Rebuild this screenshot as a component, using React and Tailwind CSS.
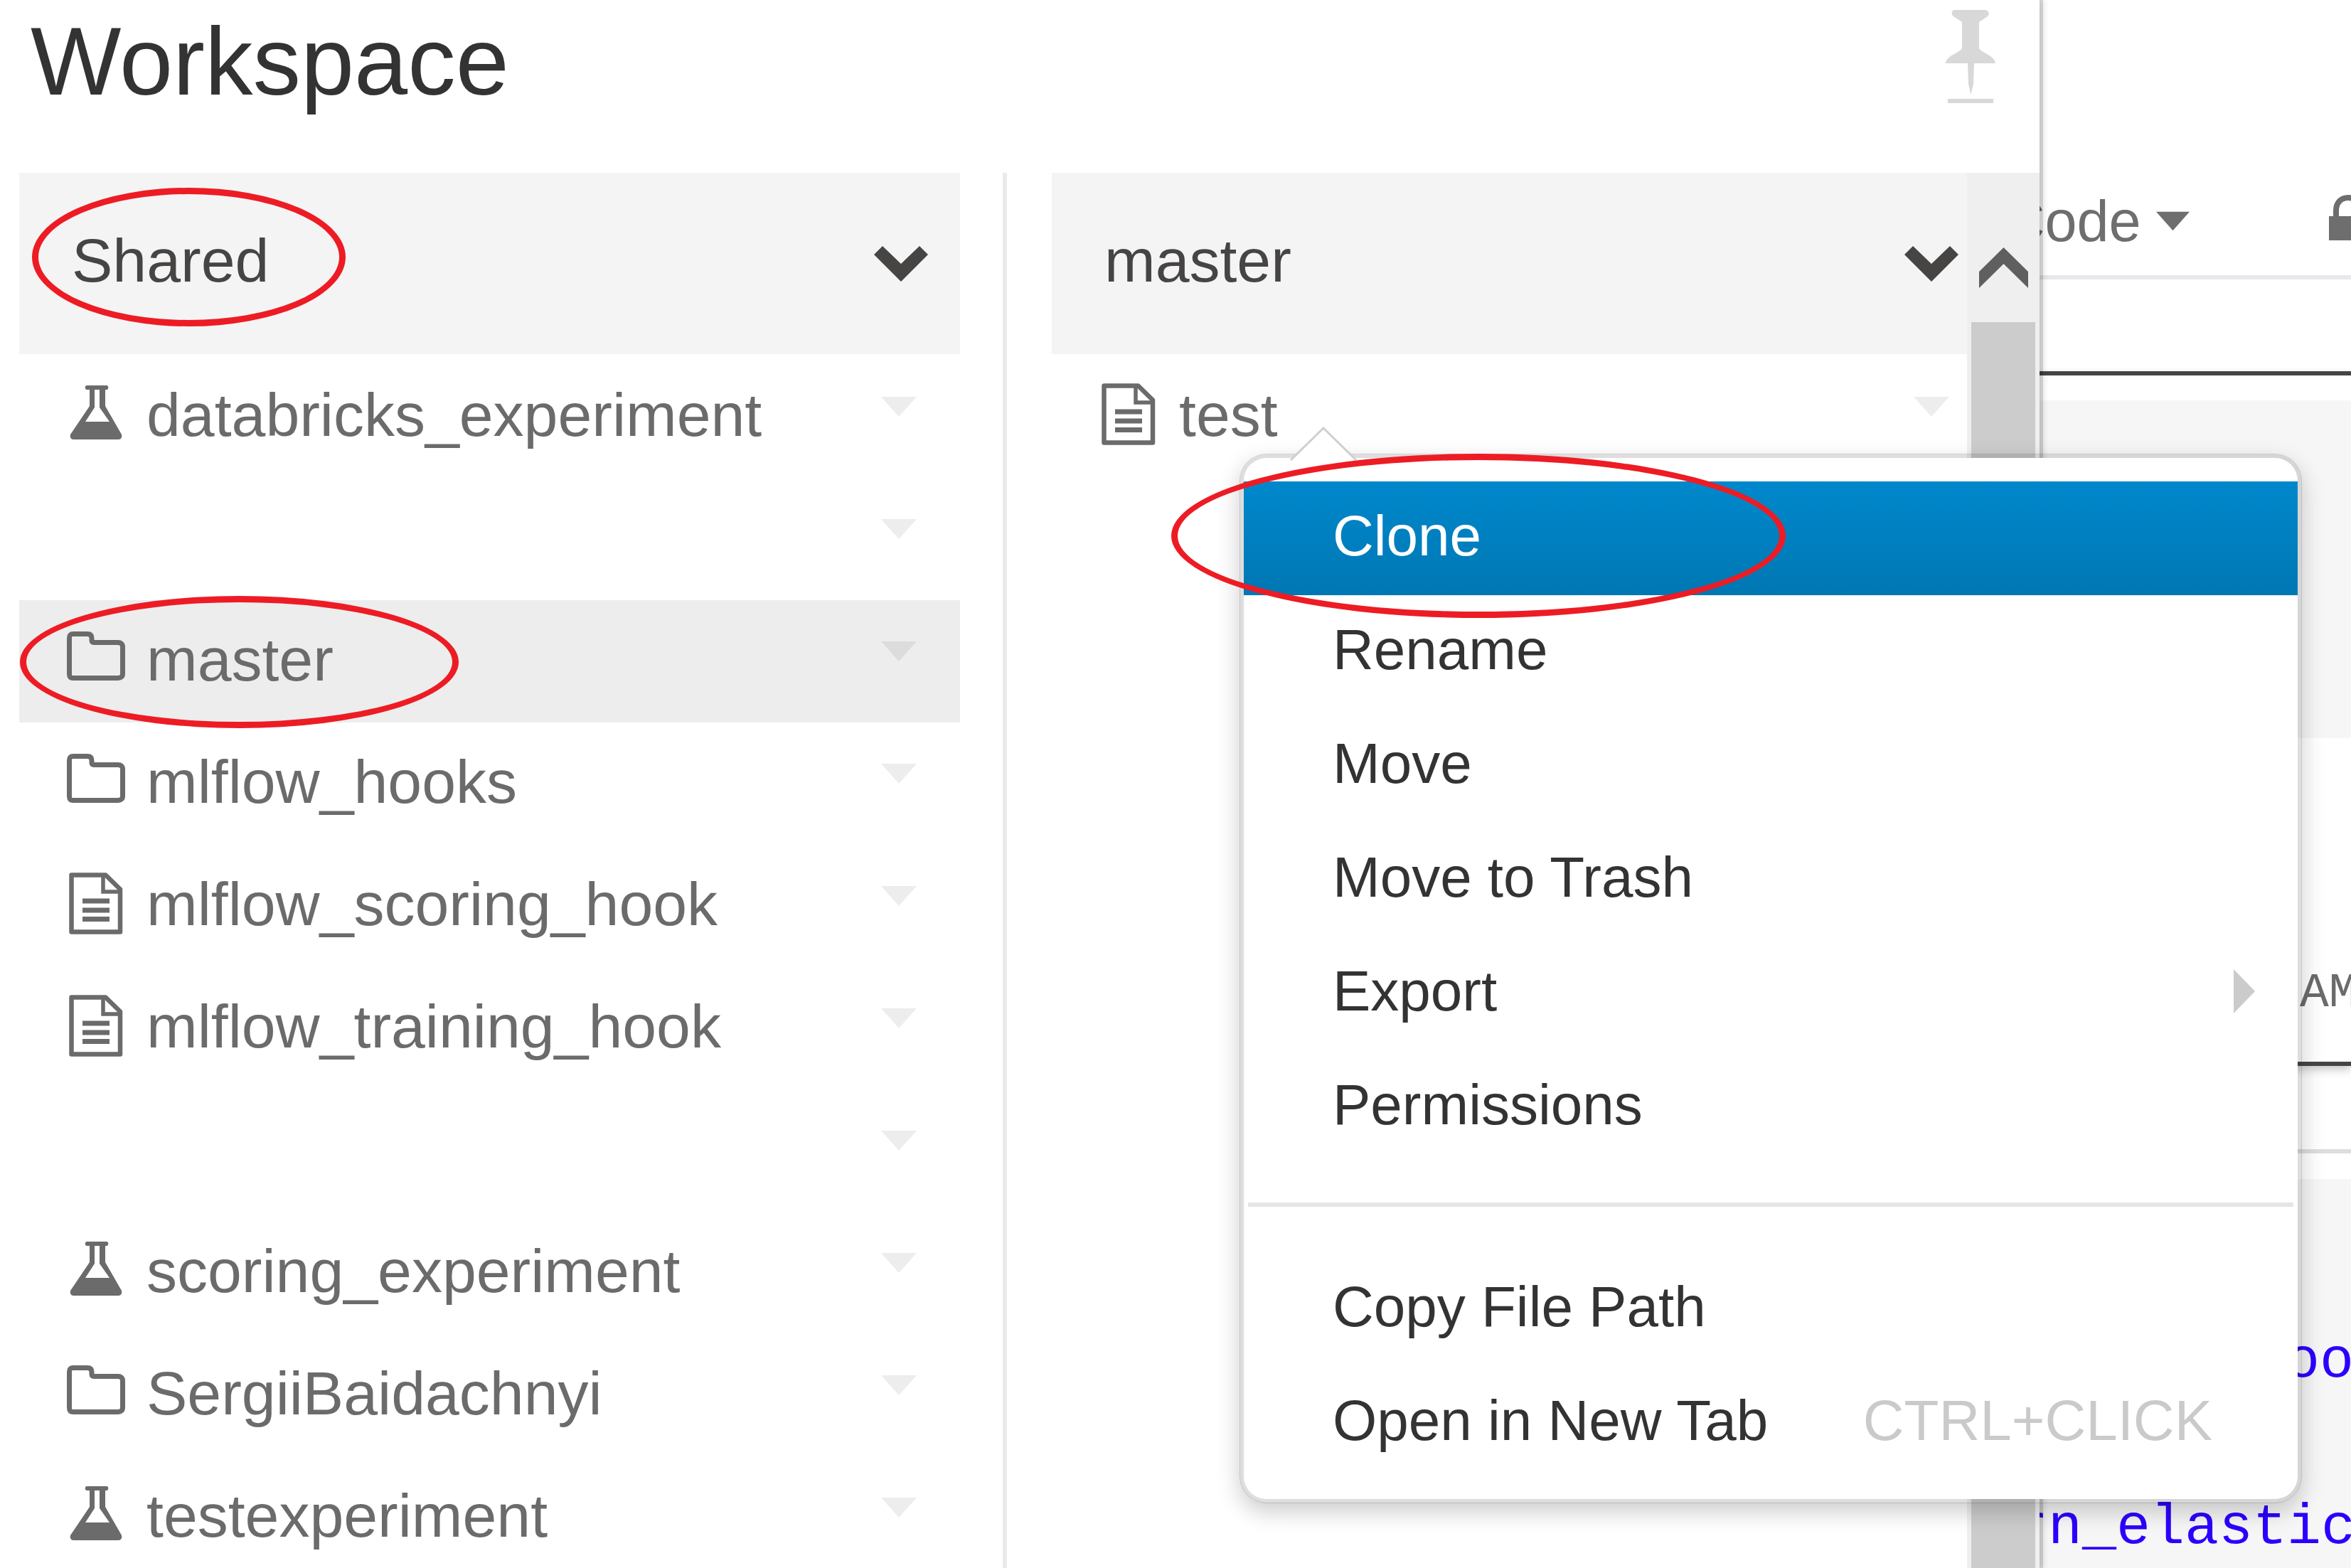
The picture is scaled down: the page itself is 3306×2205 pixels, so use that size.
const FOLDER = 'folder';
const FLASK = 'flask';
const NOTEBOOK = 'notebook';

const sharedItems = [
  { icon: FLASK, name: 'databricks_experiment' },
  { icon: null, name: '' },
  { icon: FOLDER, name: 'master', selected: true, circled: true },
  { icon: FOLDER, name: 'mlflow_hooks' },
  { icon: NOTEBOOK, name: 'mlflow_scoring_hook' },
  { icon: NOTEBOOK, name: 'mlflow_training_hook' },
  { icon: null, name: '' },
  { icon: FLASK, name: 'scoring_experiment' },
  { icon: FOLDER, name: 'SergiiBaidachnyi' },
  { icon: FLASK, name: 'testexperiment' },
];

function ItemIcon({ kind }) {
  return (
    <svg viewBox="0 0 82 96" className="h-[96px] w-[82px] shrink-0" fill="none" stroke="#6b6b6b" aria-hidden="true">
      {kind === FOLDER && (
        <path
          strokeWidth="7"
          strokeLinejoin="round"
          d="M9 12.500h20c4 0 6 2 6 6v3c0 2 1 3 3 3h34c4 0 6.500 2 6.500 6v38c0 4-2.500 6-6.500 6H9c-4 0-5.500-2-5.500-6V18.500c0-4 1.500-6 5.500-6z"
        />
      )}
      {kind === NOTEBOOK && (
        <g strokeWidth="6.500">
          <path strokeLinejoin="round" d="M6.500 7.500h48l20.500 20v60h-68.500z" />
          <path strokeWidth="5.500" d="M51 8v23h23" />
          <path strokeWidth="7" d="M22 44h38M22 57h38M22 69.500h38" />
        </g>
      )}
      {kind === FLASK && (
        <path
          fill="#6b6b6b"
          stroke="none"
          fillRule="evenodd"
          d="M28 7h28c3 0 3 6 0 6h-2v23l23 40c1 4-1 7-4 7H9c-3 0-5-3-4-7l27-40V13h-4c-3 0-3-6 0-6zM39 13v25L26 58h34L46 38V13z"
        />
      )}
    </svg>
  );
}

function Caret({ className }) {
  return (
    <svg viewBox="0 0 50 28" className={className} fill="currentColor" aria-hidden="true">
      <path d="M0 0h50L25 28z" />
    </svg>
  );
}

function Chevron() {
  return (
    <svg viewBox="0 0 76 50" className="h-[50px] w-[76px]" fill="#464543" aria-hidden="true">
      <path d="M12 0L38 25 64 0 76 12 38 50 0 12z" />
    </svg>
  );
}

function Ring({ className }) {
  return <span aria-hidden="true" className={`pointer-events-none absolute rounded-[50%] border-9 border-[#ed1c24] ${className}`} />;
}

function ColumnHeader({ title, pad, children }) {
  return (
    <header className={`relative flex h-[255px] items-center justify-between bg-[#f4f4f4] pl-[74px] ${pad}`}>
      <h2 className="pb-2.5 text-[86px] leading-none text-[#464543]">{title}</h2>
      <button type="button" aria-label={`${title} options`}>
        <Chevron />
      </button>
      {children}
    </header>
  );
}

function Row({ item, pad, children }) {
  return (
    <li className={`relative flex h-[172px] items-center justify-between pl-[67px] ${pad} ${item.selected ? 'bg-[#ededed]' : ''}`}>
      <a href="#item" className="flex items-center gap-[30px] pb-1.5 text-[86px] leading-none text-[#6b6b6b]">
        {item.icon && <ItemIcon kind={item.icon} />}
        {item.name}
      </a>
      <button type="button" aria-label={`${item.name || 'Item'} actions`} className="pb-[28px] text-black/7">
        <Caret className="h-[28px] w-[50px]" />
      </button>
      {item.circled && <Ring className="-top-[6px] left-px h-[186px] w-[617px]" />}
      {children}
    </li>
  );
}

function MenuItem({ label, hint, submenu, active }) {
  return (
    <li>
      <button
        type="button"
        role="menuitem"
        className={`flex h-[160px] w-full items-center justify-between pr-[120px] pb-1.5 pl-[125px] text-left text-[80px] leading-none ${
          active ? 'bg-linear-to-b from-[#0088cc] to-[#0077b3] text-white' : 'text-[#333333]'
        }`}
      >
        {label}
        {hint && <span className="text-[#cacaca]">{hint}</span>}
        {submenu && (
          <svg viewBox="0 0 30 62" className="-mr-[60px] h-[62px] w-[30px]" fill="#cbcbcb" aria-hidden="true">
            <path d="M0 0l30 31L0 62z" />
          </svg>
        )}
      </button>
    </li>
  );
}

function ContextMenu() {
  return (
    <div className="absolute top-[138px] left-[264px] z-20 w-[1494px]">
      <ul
        role="menu"
        aria-label="Notebook actions"
        className="rounded-[38px] border-6 border-black/13 bg-white bg-clip-padding pt-[33px] pb-[27px] shadow-[0_12px_32px_rgba(0,0,0,0.2)]"
      >
        <MenuItem label="Clone" active />
        <MenuItem label="Rename" />
        <MenuItem label="Move" />
        <MenuItem label="Move to Trash" />
        <MenuItem label="Export" submenu />
        <MenuItem label="Permissions" />
        <li role="separator" className="mx-1.5 mt-[54px] mb-16 h-1.5 bg-[#e5e5e5]" />
        <MenuItem label="Copy File Path" />
        <MenuItem label="Open in New Tab" hint="CTRL+CLICK" />
      </ul>
      <svg viewBox="0 0 96 48" className="absolute -top-[38px] left-[70px] h-[48px] w-[96px]" aria-hidden="true">
        <path d="M2 47L48 2l46 45" fill="#fff" stroke="#cfcfcf" strokeWidth="3" />
      </svg>
      <Ring className="top-0 -left-[96px] h-[231px] w-[864px]" />
    </div>
  );
}

function ScrollBar() {
  return (
    <div className="flex w-[102px] shrink-0 flex-col items-center bg-[#efefef]">
      <button type="button" aria-label="Scroll up" className="flex h-[210px] w-full shrink-0 items-center justify-center pt-14">
        <svg viewBox="0 0 69 57" className="h-[57px] w-[69px]" fill="#5f5f5f" aria-hidden="true">
          <path d="M34.500 0L69 34v23L34.500 23 0 57V34z" />
        </svg>
      </button>
      <div className="w-[90px] flex-1 bg-[#cccccc]" />
    </div>
  );
}

function WorkspacePanel() {
  return (
    <section className="relative z-10 flex w-[2868px] shrink-0 flex-col bg-white shadow-[5px_0_0_rgba(0,0,0,0.12),6px_0_8px_rgba(0,0,0,0.12)]">
      <div className="flex h-[243px] shrink-0 items-start justify-between pr-[61px] pl-[43px]">
        <h1 className="pt-[19px] text-[135px] leading-none text-[#333333]">Workspace</h1>
        <button type="button" aria-label="Pin panel" className="pt-3.5">
          <svg viewBox="0 0 72 132" className="h-[132px] w-[72px]" fill="#d8d8d8" aria-hidden="true">
            <path d="M14 0h42c6 0 7 6 4 9L48 17v37c3 6 22 10 23 21H1c1-11 20-15 23-21V17L12 9c-4-3-3-9 2-9z" />
            <path d="M32 74h9l-1 30-3.500 15L33 104z" />
            <path d="M4 125h64v6H4z" />
          </svg>
        </button>
      </div>
      <div className="flex min-h-0 flex-1">
        <div className="ml-[27px] w-[1323px] shrink-0">
          <ColumnHeader title="Shared" pad="pr-[45px]">
            <Ring className="top-[21px] left-[18px] h-[195px] w-[441px]" />
          </ColumnHeader>
          <ul className="pt-0.5">
            {sharedItems.map((item, i) => (
              <Row key={i} item={item} pad="pr-[61px]" />
            ))}
          </ul>
        </div>
        <div className="mr-[63px] ml-[60px] w-1.5 shrink-0 bg-[#e8eaec]" />
        <div className="min-w-0 flex-1">
          <ColumnHeader title="master" pad="pr-3" />
          <ul className="pt-0.5">
            <Row item={{ icon: NOTEBOOK, name: 'test' }} pad="pr-[25px]">
              <ContextMenu />
            </Row>
          </ul>
        </div>
        <ScrollBar />
      </div>
    </section>
  );
}

function NotebookPane() {
  return (
    <main className="flex min-w-0 flex-1 flex-col overflow-hidden bg-white">
      <div className="flex h-[393px] shrink-0 items-end gap-[196px] border-b-6 border-[#e6e8eb] pb-[34px] whitespace-nowrap text-[#6e6e6e]">
        <button type="button" className="-ml-[51px] flex shrink-0 items-center gap-[21px] text-[81px] leading-[84px]">
          Code
          <Caret className="h-[28px] w-[47px]" />
        </button>
        <svg viewBox="0 0 54 64" className="mb-[15px] h-[64px] w-[54px] shrink-0" aria-hidden="true">
          <path d="M10 34V22C10 11 17 4 27 4s17 7 17 18v12" fill="none" stroke="#6e6e6e" strokeWidth="8" />
          <rect y="30" width="54" height="34" fill="#6e6e6e" />
        </svg>
      </div>
      <div className="mt-[129px] shrink-0 border-y-6 border-[#464543] pt-[35px] shadow-[0_6px_12px_rgba(0,0,0,0.2)]">
        <div className="h-[475px] bg-[#f6f6f6]" />
        <p className="h-[455px] pt-[320px] pl-[366px] font-['Liberation_Mono',monospace] text-[68px] leading-[78px] whitespace-nowrap text-[#6b6b6b]">
          AM
        </p>
      </div>
      <div className="mt-[117px] flex-1 border-t-6 border-[#dedede] pt-9">
        <pre className="h-full bg-[#f6f6f6] font-['Liberation_Mono',monospace] text-[80px] text-[#2b00fe]">
          <code className="block pt-[212px] pl-[346px] leading-[90px]">oo</code>
          <code className="-ml-9 block pt-[144px] leading-[90px]">rn_elastic</code>
        </pre>
      </div>
    </main>
  );
}

export default function App() {
  return (
    <div className="flex h-screen overflow-hidden bg-white font-['Liberation_Sans',Arial,sans-serif]">
      <WorkspacePanel />
      <NotebookPane />
    </div>
  );
}
